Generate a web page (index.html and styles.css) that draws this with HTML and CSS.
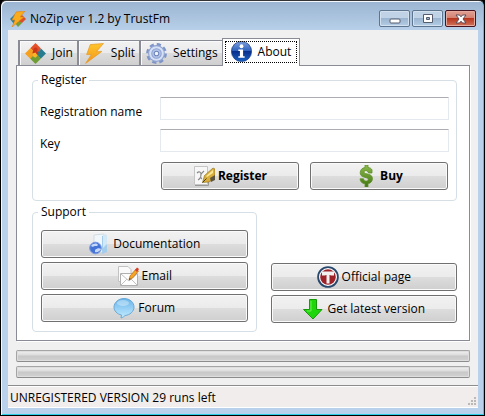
FILE: index.html
```
<!DOCTYPE html>
<html lang="en">
<head>
    <meta charset="UTF-8">
    <title>NoZip ver 1.2 by TrustFm</title>
    <meta name="viewport" content="width=device-width, initial-scale=1.0">
    <link rel="stylesheet" href="styles.css">
</head>
<body>
<div class="window">
    <!-- Title bar -->
    <header class="titlebar">
        <svg class="app-icon" viewBox="0 0 16 16">
            <path d="M0 8L5 3l3 5-4 5z" fill="#2b7f93"/>
            <path d="M9 7l3-3 4 4-4 4-3-1z" fill="#d9502b"/>
            <path d="M5 12l4-2 3 2-4 4z" fill="#7a9a35"/>
            <path d="M6 1L15 0 10 6h4L2 16 5 9H2z" fill="#fbac1c" stroke="#e27f13" stroke-width=".6"/>
        </svg>
        <h1>NoZip ver 1.2 by TrustFm</h1>
        <div class="window-buttons">
            <button type="button" aria-label="Minimize">
                <svg width="12" height="12" viewBox="0 0 12 12"><rect x="1" y="6" width="10" height="4" rx="1" fill="#fff" stroke="#555c6e"/></svg>
            </button>
            <button type="button" aria-label="Maximize">
                <svg width="12" height="12" viewBox="0 0 12 12"><path d="M1.500 1.500h9v8h-9zM4.500 4.500v2h3v-2z" fill="#fff" fill-rule="evenodd" stroke="#555c6e"/></svg>
            </button>
            <button type="button" class="close" aria-label="Close">
                <svg width="12" height="12" viewBox="0 0 12 12"><path d="M1 2h3.500L6 3.800 7.500 2H11L8 6l3 4H7.500L6 8.200 4.500 10H1l3-4z" fill="#fff" stroke="#5a4a56"/></svg>
            </button>
        </div>
    </header>

    <main class="client">
        <!-- Tabs -->
        <div class="tabs" role="tablist">
            <button type="button" class="tab" role="tab">
                <svg viewBox="0 0 20 20">
                    <path d="M10 0l5 5-1 4-4 1-5-5z" fill="#e5502a"/>
                    <path d="M0 10l5-5 2 2 2 0 1 3-2 2 1 4-4-1z" fill="#f6a11d"/>
                    <path d="M15 5l5 5-5 5-5-5 1-2 3 0z" fill="#287c8f"/>
                    <path d="M5 15l3-3 3-2 4 5-5 5z" fill="#6f9d34"/>
                    <path d="M8 6a2 2 0 1 1 3 2l2 2-3 2-3-2z" fill="#c93618"/>
                    <path d="M7 10l3-1 2 3-2 2-2-1z" fill="#f9b42c"/>
                </svg>
                <span>Join</span>
            </button>
            <button type="button" class="tab" role="tab">
                <svg viewBox="0 0 20 20">
                    <defs>
                        <linearGradient id="bolt" x2="0" y2="1">
                            <stop offset="0" stop-color="#ffc62e"/>
                            <stop offset="1" stop-color="#f39317"/>
                        </linearGradient>
                    </defs>
                    <path d="M6 1.500L18.500.5 12 8h5L1.500 19.500 7 11H2.500z" fill="url(#bolt)" stroke="#e89a26" stroke-width=".7"/>
                </svg>
                <span>Split</span>
            </button>
            <button type="button" class="tab" role="tab">
                <svg viewBox="0 0 20 20">
                    <circle cx="10" cy="10" r="8.700" fill="none" stroke="#7f95c8" stroke-width="2.400" stroke-dasharray="4 2.830"/>
                    <circle cx="10" cy="10" r="7.500" fill="#d5e0f5" stroke="#8da2d2"/>
                    <circle cx="10" cy="10" r="4.500" fill="#b5c6ea" stroke="#8da2d2"/>
                    <circle cx="10" cy="10" r="2.200" fill="#f2f4f9" stroke="#6d85bd"/>
                </svg>
                <span>Settings</span>
            </button>
            <button type="button" class="tab active" role="tab" aria-selected="true">
                <svg viewBox="0 0 20 20">
                    <defs>
                        <linearGradient id="info" x2="0" y2="1">
                            <stop offset="0" stop-color="#7f9fdc"/>
                            <stop offset=".48" stop-color="#2b5fbb"/>
                            <stop offset=".5" stop-color="#082f8c"/>
                            <stop offset="1" stop-color="#1a62c4"/>
                        </linearGradient>
                    </defs>
                    <circle cx="10" cy="10" r="9.600" fill="url(#info)" stroke="#173a80" stroke-width=".7"/>
                    <circle cx="10" cy="5" r="1.800" fill="#fff"/>
                    <path d="M7 8h4.500v6.500H13V16H7v-1.500h1.500v-5H7z" fill="#fff"/>
                </svg>
                <span>About</span>
            </button>
        </div>

        <!-- About page -->
        <section class="panel" role="tabpanel">
            <fieldset class="register">
                <legend>Register</legend>
                <label for="reg-name">Registration name</label>
                <input type="text" id="reg-name">
                <label for="reg-key">Key</label>
                <input type="text" id="reg-key">
                <div class="actions">
                    <button type="button" class="btn strong">
                        <svg viewBox="0 0 22 22">
                            <path d="M1.500 1.500h13v18h-13z" fill="#f7f7f7" stroke="#c5c5c5"/>
                            <path d="M2 20.500h13.500V12" fill="none" stroke="#999"/>
                            <path d="M4 8c2-2 4-1 4 1s-1 5-3 6M11 6c-4 3-4 7-2 8" fill="none" stroke="#888" stroke-width="1.200"/>
                            <path d="M9.500 17.500l2-7L20 3l2 1v9l-6 4z" fill="#d9ae3a" stroke="#8a6a1b" stroke-width=".6"/>
                            <path d="M13 11l7-6v3l-6 4z" fill="#fbe79a"/>
                            <path d="M9.500 17.500l4-4" stroke="#4a3c1c"/>
                            <path d="M17 13l5-3v5l-4 2z" fill="#5d5541"/>
                        </svg>
                        <span>Register</span>
                    </button>
                    <button type="button" class="btn strong">
                        <svg viewBox="0 0 22 22">
                            <defs>
                                <linearGradient id="cash" x2="0" y2="1">
                                    <stop offset="0" stop-color="#8dbb4d"/>
                                    <stop offset="1" stop-color="#417511"/>
                                </linearGradient>
                            </defs>
                            <path d="M10 0h3v2.500c2 .2 3.500 1 4 2.500v3h-3.500C13 6.500 12 5.500 10.500 5.700 8.500 6 8.800 8 10.500 8.500l3 .8c3 .8 4.200 2.500 3.900 4.900-.3 2.600-2 4-4.400 4.400V22h-3v-3.300c-3-.2-4.600-1.800-5-4.900H8.500c.3 1.700 1.300 2.400 2.900 2.300 2.200-.2 2.400-2.500.6-3.100l-3-.9c-2.500-.7-3.900-2-3.800-4.400.1-3 1.900-4.700 4.800-5.200z" fill="url(#cash)" stroke="#5f8f2a" stroke-width=".8"/>
                        </svg>
                        <span>Buy</span>
                    </button>
                </div>
            </fieldset>

            <div class="columns">
                <fieldset class="support">
                    <legend>Support</legend>
                    <button type="button" class="btn">
                        <svg viewBox="0 0 22 22">
                            <path d="M6 2l10-1v18l-10 1z" fill="#f1f6fa" stroke="#c4d2dd" stroke-width=".7"/>
                            <path d="M14 3l4-1 1 3v14l-5 2z" fill="#a3cdea"/>
                            <path d="M15 2l3-1 1 3v7l-4 4z" fill="#d3e8f5"/>
                            <circle cx="7.500" cy="15" r="5.800" fill="#4573d5" stroke="#7297e2"/>
                            <path d="M3 13c2-3 6-3 7-1-1 2-4 0-5 2zM7 17c2-2 5-2 6-1-1 2-4 4-6 3z" fill="#c6d8fa"/>
                        </svg>
                        <span>Documentation</span>
                    </button>
                    <button type="button" class="btn">
                        <svg viewBox="0 0 22 22">
                            <path d="M1.500 1.500H11l3 3v12H1.500z" fill="#fafafa" stroke="#c2c2c2"/>
                            <path d="M3.500 8.500h17v12h-17z" fill="#fdfdfd" stroke="#b0b0b0"/>
                            <path d="M4 20l6-6M20 20l-6-6M4 9l8 7 8-7" fill="none" stroke="#c0c0c0"/>
                            <path d="M12 15l1-4 6-7 2.500 2-6 7z" fill="#f6a525" stroke="#b96a13" stroke-width=".7"/>
                            <path d="M18 5l2-2.500 2 1.500-2 3z" fill="#da3b22"/>
                            <path d="M12 15l.6-2 1.200 1z" fill="#333"/>
                        </svg>
                        <span>Email</span>
                    </button>
                    <button type="button" class="btn">
                        <svg viewBox="0 0 22 22">
                            <defs>
                                <linearGradient id="bubble" x2="0" y2="1">
                                    <stop offset="0" stop-color="#69b4ea"/>
                                    <stop offset="1" stop-color="#c3ecff"/>
                                </linearGradient>
                            </defs>
                            <path d="M11 1.500c6 0 10 4 10 8.500s-4 8-9 8.500c-1 1-2 2-4 2.500l.5-3C4 17 1 14 1 10s4-8.500 10-8.500z" fill="url(#bubble)" stroke="#6aa9d6"/>
                            <ellipse cx="10" cy="6" rx="6" ry="3" fill="#fff" opacity=".35"/>
                        </svg>
                        <span>Forum</span>
                    </button>
                </fieldset>

                <div class="links">
                    <button type="button" class="btn">
                        <svg viewBox="0 0 22 22">
                            <circle cx="11" cy="11" r="9.900" fill="#fff" stroke="#28486d" stroke-width="1.800"/>
                            <circle cx="11" cy="11" r="7.800" fill="#9c2228"/>
                            <path d="M5 5.500h12v4h-3.500V9h-1v8.500h-3V9h-1v.5H5z" fill="#f3f0f0"/>
                        </svg>
                        <span>Official page</span>
                    </button>
                    <button type="button" class="btn">
                        <svg viewBox="0 0 22 22">
                            <path d="M7.500 1.500h7v10H20L11 21 1.500 11.500h6z" fill="#1fd50b" stroke="#169a0c"/>
                            <path d="M9 3v10H5" fill="none" stroke="#6bf257"/>
                        </svg>
                        <span>Get latest version</span>
                    </button>
                </div>
            </div>
        </section>

        <div class="progress"></div>
        <div class="progress"></div>
    </main>

    <footer class="statusbar">
        <span>UNREGISTERED VERSION 29 runs left</span>
        <svg class="grip" width="9" height="9" viewBox="0 0 9 9">
            <path d="M7 0h2v2H7zM4 3h2v2H4zM7 3h2v2H7zM1 6h2v2H1zM4 6h2v2H4zM7 6h2v2H7z" fill="#bcb8b6"/>
        </svg>
    </footer>
</div>
</body>
</html>
```

FILE: styles.css
```
* {
    box-sizing: border-box;
}
body {
    margin: 0;
    background-color: #000;
    font-family: "Open Sans", "Noto Sans", sans-serif;
    font-size: 12px;
    line-height: 16px;
    color: #000;
}
button, input {
    font: inherit;
    color: inherit;
}
.window {
    display: flex;
    flex-direction: column;
    min-height: 100vh;
    padding: 0 6px 7px;
    border: 1px solid #000;
    border-top-color: #333;
    border-radius: 6px 6px 0 0;
    background: linear-gradient(#9ab3d0, #b9d1ea 30px);
    box-shadow: inset 1px 1px #f4f8fc, inset -1px -1px #2ccfe6;
}
/* Title bar */
.titlebar {
    display: flex;
    align-items: center;
    height: 29px;
    padding: 6px 2px 0 3px;
}
.app-icon {
    width: 16px;
    height: 16px;
    margin-right: 4px;
}
h1 {
    flex: 1;
    margin: 0;
    font-size: 12px;
    font-weight: normal;
}
.window-buttons {
    display: flex;
    gap: 2px;
}
.window-buttons button {
    display: grid;
    place-items: center;
    width: 31px;
    height: 17px;
    padding: 0;
    border: 1px solid #5e7590;
    border-radius: 2px;
    background: linear-gradient(#c0d2e6 50%, #9bb5d1 50%, #b5cde5);
    box-shadow: inset 0 0 0 1px #d3e1ef;
}
.window-buttons .close {
    border-color: #47131f;
    background: linear-gradient(#e1a093, #d3806f 50%, #b8361f 50%, #d0735b);
    box-shadow: inset 0 0 0 1px #e6a99d;
}
/* Client area */
.client {
    flex: 1;
    display: flex;
    flex-direction: column;
    margin-left: 1px;
    padding: 8px 8px 7px;
    background-color: #f0f0f0;
}
.tabs {
    position: relative;
    display: flex;
    align-items: flex-end;
    height: 28px;
    margin: 0 2px -1px;
}
.tab {
    display: flex;
    align-items: center;
    gap: 6px;
    height: 26px;
    padding: 0 4px 0 5px;
    border: 1px solid #898c95;
    border-left-width: 2px;
    border-right: 0;
    background: linear-gradient(#f2f2f2, #ebebeb 50%, #dddddd 50%, #cfcfcf);
    box-shadow: inset 1px 1px #fafafa;
}
.tab svg {
    width: 21px;
    height: 21px;
}
.tab.active {
    height: 28px;
    padding: 0 8px 2px;
    border-width: 1px 1px 0;
    border-right: 1px solid #898c95;
    background: #fff;
    box-shadow: none;
    outline: 1px dotted #000;
    outline-offset: -4px;
}
.panel {
    flex: 1;
    padding: 6px 12px 8px 15px;
    border: 1px solid #898c95;
    background-color: #fff;
    box-shadow: 1px 1px #fff;
}
/* Groups */
fieldset {
    min-width: 0;
    margin: 0;
    border: 1px solid #d5dfe5;
    border-radius: 4px;
}
legend {
    padding: 0 3px;
}
.register {
    display: grid;
    grid-template-columns: 112px 1fr;
    gap: 9px 8px;
    padding: 9px 7px 10px;
}
.register legend {
    margin-left: -2px;
}
.register label {
    padding-top: 7px;
}
.register input {
    width: 100%;
    height: 23px;
    padding: 2px 4px;
    border: 1px solid #e3e9ef;
    border-top-color: #abadb3;
    border-radius: 1px;
}
.actions {
    grid-column: 2;
    display: grid;
    grid-template-columns: 1fr 1fr;
    gap: 11px;
    padding: 1px 1px 0;
}
.columns {
    display: grid;
    grid-template-columns: 224fr 186fr;
    gap: 14px;
    margin-top: 3px;
}
.support {
    display: flex;
    flex-direction: column;
    gap: 4px;
    padding: 10px 8px 9px;
}
.support legend {
    margin-left: -3px;
}
.links {
    display: flex;
    flex-direction: column;
    justify-content: flex-end;
    gap: 4px;
    padding-bottom: 9px;
}
/* Buttons */
.btn {
    display: flex;
    align-items: center;
    justify-content: center;
    gap: 3px;
    width: 100%;
    height: 28px;
    padding: 0;
    border: 1px solid #707070;
    border-radius: 3px;
    background: linear-gradient(#f2f2f2, #ebebeb 50%, #dddddd 50%, #cfcfcf);
    box-shadow: inset 0 0 0 1px #fafafa;
}
.btn svg {
    width: 22px;
    height: 22px;
}
.strong {
    font-weight: bold;
}
/* Progress and status */
.progress {
    height: 12px;
    margin-top: 4px;
    border: 1px solid #a5a5a5;
    border-bottom-color: #8c8c8c;
    border-radius: 2px;
    background: linear-gradient(#f0f0f0, #dcdcdc 40%, #c8c8c8 50%, #d2d2d2);
    box-shadow: inset 0 0 0 1px #dedede;
}
.panel + .progress {
    margin-top: 9px;
}
.statusbar {
    display: flex;
    justify-content: space-between;
    align-items: flex-end;
    height: 23px;
    margin-left: 1px;
    padding: 0 2px 2px;
    border-top: 1px solid #8c8c8c;
    background-color: #f1edec;
    box-shadow: inset 0 1px #fff, inset 0 -1px #fff;
}
```
